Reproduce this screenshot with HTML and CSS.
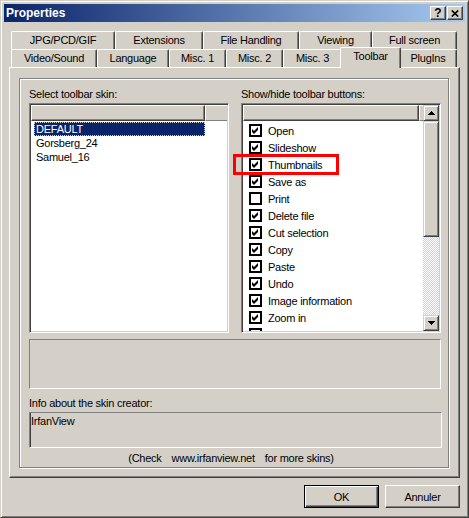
FILE: index.html
```html
<!DOCTYPE html>
<html lang="en">
<head>
    <meta charset="UTF-8">
    <meta name="viewport" content="width=device-width, initial-scale=1.0">
    <title>Properties</title>
    <link rel="stylesheet" href="styles.css">
</head>
<body>

    <div class="window">
        <!-- Title bar -->
        <div class="titlebar">
            <span class="title">Properties</span>
            <div class="caption-buttons">
                <span class="cap-btn help">?</span>
                <span class="cap-btn">
                    <svg width="8" height="7" viewBox="0 0 8 7"><path d="M0.8 0.5 L7.2 6.5 M7.2 0.5 L0.8 6.5" stroke="#000" stroke-width="1.7"/></svg>
                </span>
            </div>
        </div>

        <!-- Tab strip, two rows -->
        <div class="tabs">
            <div class="tab-row back">
                <div class="tab">JPG/PCD/GIF</div>
                <div class="tab">Extensions</div>
                <div class="tab">File Handling</div>
                <div class="tab">Viewing</div>
                <div class="tab">Full screen</div>
            </div>
            <div class="tab-row front">
                <div class="tab">Video/Sound</div>
                <div class="tab">Language</div>
                <div class="tab">Misc. 1</div>
                <div class="tab">Misc. 2</div>
                <div class="tab">Misc. 3</div>
                <div class="tab active">Toolbar</div>
                <div class="tab">PlugIns</div>
            </div>
        </div>

        <div class="panel">
            <div class="group">
                <div class="columns">
                    <!-- Skins -->
                    <div class="column">
                        <div class="label">Select toolbar skin:</div>
                        <div class="listbox">
                            <div class="list-header">
                                <div class="col"></div>
                                <div class="filler"></div>
                            </div>
                            <ul class="skin-list">
                                <li class="selected">DEFAULT</li>
                                <li>Gorsberg_24</li>
                                <li>Samuel_16</li>
                            </ul>
                        </div>
                    </div>

                    <!-- Buttons on/off -->
                    <div class="column right">
                        <div class="label">Show/hide toolbar buttons:</div>
                        <div class="listbox split">
                            <div class="list-main">
                                <div class="list-header">
                                    <div class="col wide"></div>
                                    <div class="filler"></div>
                                </div>
                                <ul class="check-list" id="checkList"></ul>
                            </div>
                            <div class="scrollbar">
                                <div class="sb-btn">
                                    <svg width="7" height="4" viewBox="0 0 7 4"><path d="M3 0h1v1h1v1h1v1h1v1H0V3h1V2h1V1h1z"/></svg>
                                </div>
                                <div class="sb-thumb"></div>
                                <div class="sb-track"></div>
                                <div class="sb-btn">
                                    <svg width="7" height="4" viewBox="0 0 7 4"><path d="M0 0h7v1H6v1H5v1H4v1H3V3H2V2H1V1H0z"/></svg>
                                </div>
                            </div>
                        </div>
                        <div class="marker"></div>
                    </div>
                </div>

                <div class="static-box"></div>

                <div class="label info-label">Info about the skin creator:</div>
                <div class="info-box">IrfanView</div>

                <div class="check-line">
                    <span>(Check</span>
                    <span>www.irfanview.net</span>
                    <span>for more skins)</span>
                </div>
            </div>
        </div>

        <div class="buttons">
            <button class="default">OK</button>
            <button>Annuler</button>
        </div>
    </div>

    <script>
        // toolbar buttons, true = shown
        const items = [
            ['Open', true], ['Slideshow', true], ['Thumbnails', true], ['Save as', true],
            ['Print', false], ['Delete file', true], ['Cut selection', true], ['Copy', true],
            ['Paste', true], ['Undo', true], ['Image information', true], ['Zoom in', true],
            ['Zoom out', true]
        ];

        const tick = '<svg width="9" height="9" viewBox="0 0 9 9"><path transform="translate(1 1)" d="M0 2l2 2 4-4v3l-4 4-2-2z"/></svg>';
        const list = document.getElementById('checkList');

        items.forEach(([name, on]) => {
            const li = document.createElement('li');
            li.innerHTML = `<span class="box">${on ? tick : ''}</span><span>${name}</span>`;
            list.appendChild(li);
        });
    </script>
</body>
</html>
```

FILE: styles.css
```css
* { box-sizing: border-box; }

body {
    margin: 0;
    font-family: 'Liberation Sans', Arial, sans-serif;
    font-size: 11px;
    letter-spacing: -0.25px;
    color: #000;
    background: #d4d0c8;
}

.window {
    width: 469px;
    height: 518px;
    background: #d4d0c8;
    border: 1px solid;
    border-color: #d4d0c8 #404040 #404040 #d4d0c8;
    box-shadow: inset 1px 1px #fff, inset -1px -1px #808080;
    padding: 3px;
}

/* title bar */
.titlebar {
    height: 18px;
    display: flex;
    align-items: center;
    justify-content: space-between;
    padding: 0 2px 0 2px;
    background: linear-gradient(to right, #0a246a, #a6caf0);
}

.title {
    color: #fff;
    font-weight: bold;
    font-size: 12px;
    letter-spacing: 0;
}

.caption-buttons { display: flex; gap: 1px; }

.cap-btn {
    width: 16px;
    height: 14px;
    display: flex;
    align-items: center;
    justify-content: center;
    background: #d4d0c8;
    border: 1px solid;
    border-color: #fff #404040 #404040 #fff;
    box-shadow: inset -1px -1px #808080;
}

.cap-btn.help {
    font-weight: bold;
    font-size: 12px;
    letter-spacing: 0;
    line-height: 12px;
    padding-bottom: 1px;
}

/* tabs */
.tabs {
    margin-top: 9px;
    padding: 0 7px;
}

.tab-row {
    display: flex;
    height: 18px;
}

.tab {
    height: 18px;
    border: 1px solid #fff;
    border-bottom: none;
    border-right-color: #404040;
    border-radius: 2px 2px 0 0;
    box-shadow: inset -1px 0 #808080;
    background: #d4d0c8;
    text-align: center;
    line-height: 17px;
    white-space: nowrap;
}

.back .tab:nth-child(1) { width: 104px; }
.back .tab:nth-child(2) { width: 88px; }
.back .tab:nth-child(3) { width: 96px; }
.back .tab:nth-child(4) { width: 73px; }
.back .tab:nth-child(5) { width: 85px; }

.front .tab:nth-child(1) { width: 86px; }
.front .tab:nth-child(2) { width: 72px; }
.front .tab:nth-child(3) { width: 57px; }
.front .tab:nth-child(4) { width: 57px; }
.front .tab:nth-child(5) { width: 59px; }
.front .tab:nth-child(6) { width: 57px; }
.front .tab:nth-child(7) { width: 58px; }

.front .tab.active {
    position: relative;
    z-index: 1;
    width: 61px;
    height: 21px;
    margin: -2px -2px -1px;
}

/* tab page */
.panel {
    margin: 0 5px;
    height: 411px;
    border: 1px solid #fff;
    border-right-color: #404040;
    border-bottom-color: #404040;
    box-shadow: inset -1px -1px #808080;
    padding: 10px 0 0 9px;
}

.group {
    width: 430px;
    height: 390px;
    border: 1px solid #808080;
    box-shadow: inset 1px 1px #fff, 1px 1px #fff;
    padding: 9px 0 0 9px;
}

.columns {
    display: flex;
    gap: 12px;
}

.column {
    width: 200px;
}

.column.right { position: relative; }

.label {
    height: 13px;
    line-height: 13px;
    margin-bottom: 2px;
}

.listbox {
    height: 230px;
    background: #fff;
    border: 1px solid;
    border-color: #808080 #fff #fff #808080;
    box-shadow: inset 1px 1px #404040, inset -1px -1px #d4d0c8;
    padding: 1px;
    overflow: hidden;
}

.listbox.split { display: flex; }

.list-main {
    flex: 1;
    overflow: hidden;
}

.list-header {
    display: flex;
    height: 16px;
    background: #d4d0c8;
}

.list-header .col {
    width: 174px;
    border: 1px solid;
    border-color: #fff #404040 #404040 #fff;
    box-shadow: inset -1px -1px #808080;
}

.list-header .col.wide { width: 176px; }

.list-header .filler {
    flex: 1;
    border-top: 1px solid #fff;
    border-left: 1px solid #fff;
    border-bottom: 1px solid #808080;
}

.skin-list {
    list-style: none;
    margin: 1px 0 0;
    padding: 0 0 0 3px;
}

.skin-list li {
    width: 171px;
    height: 14px;
    line-height: 14px;
    padding-left: 2px;
}

.skin-list li.selected {
    background: #0a246a;
    color: #fff;
    outline: 1px dotted #d4d0c8;
    outline-offset: -1px;
}

.check-list {
    list-style: none;
    margin: 1px 0 0;
    padding: 0 0 0 6px;
}

.check-list li {
    height: 17px;
    display: flex;
    align-items: center;
    gap: 6px;
}

.check-list .box {
    width: 13px;
    height: 13px;
    border: 2px solid #000;
    background: #fff;
    display: flex;
}

/* scrollbar */
.scrollbar {
    width: 16px;
    display: flex;
    flex-direction: column;
}

.sb-btn, .sb-thumb {
    background: #d4d0c8;
    border: 1px solid;
    border-color: #d4d0c8 #404040 #404040 #d4d0c8;
    box-shadow: inset 1px 1px #fff, inset -1px -1px #808080;
}

.sb-btn {
    height: 16px;
    display: flex;
    align-items: center;
    justify-content: center;
}

.sb-thumb { height: 116px; }

.sb-track {
    flex: 1;
    background: repeating-conic-gradient(#d4d0c8 0 25%, #fff 0 50%) 0 0 / 2px 2px;
}

/* annotation around Thumbnails */
.marker {
    position: absolute;
    left: -8px;
    top: 66px;
    width: 106px;
    height: 21px;
    border: 3px solid #f00;
}

.static-box {
    margin-top: 6px;
    width: 412px;
    height: 50px;
    border: 1px solid;
    border-color: #808080 #fff #fff #808080;
}

.info-label { margin-top: 8px; margin-bottom: 2px; }

.info-box {
    width: 413px;
    height: 36px;
    border: 1px solid;
    border-color: #808080 #fff #fff #808080;
    box-shadow: inset 1px 0 #404040;
    padding: 2px 0 0 1px;
    line-height: 13px;
}

.check-line {
    width: 412px;
    margin-top: 4px;
    display: flex;
    justify-content: center;
    gap: 10px;
    padding-right: 8px;
    line-height: 13px;
}

/* dialog buttons */
.buttons {
    display: flex;
    justify-content: flex-end;
    gap: 6px;
    margin: 7px 5px 0;
}

button {
    width: 75px;
    height: 23px;
    font-family: inherit;
    font-size: 11px;
    letter-spacing: -0.25px;
    color: #000;
    background: #d4d0c8;
    border: 1px solid;
    border-color: #fff #404040 #404040 #fff;
    box-shadow: inset -1px -1px #808080;
    padding: 0;
}

button.default {
    border-color: #000;
    box-shadow: inset 1px 1px #fff, inset -1px -1px #404040, inset -2px -2px #808080;
}
```
